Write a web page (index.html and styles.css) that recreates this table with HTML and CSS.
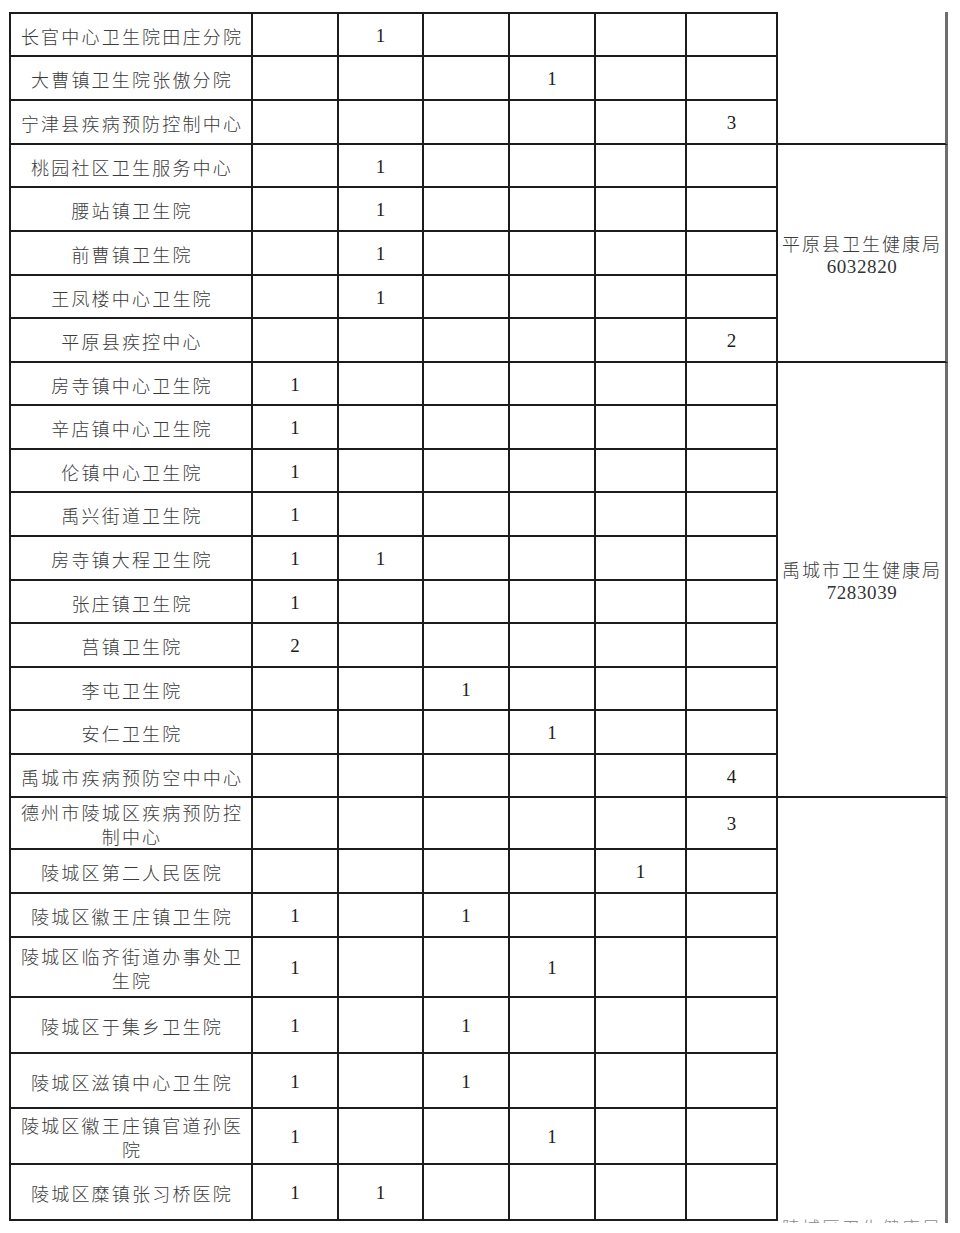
FILE: index.html
```html
<!DOCTYPE html>
<html lang="zh-CN">
<head>
<meta charset="utf-8">
<title>卫生院名额表</title>
<link rel="stylesheet" href="styles.css">
</head>
<body>
<div class="sheet">
  <div class="c name top">长官中心卫生院田庄分院</div><div class="c top"></div><div class="c top">1</div><div class="c top"></div><div class="c top"></div><div class="c top"></div><div class="c top"></div>
  <div class="org g1"></div>
  <div class="c name">大曹镇卫生院张傲分院</div><div class="c"></div><div class="c"></div><div class="c"></div><div class="c">1</div><div class="c"></div><div class="c"></div>
  <div class="c name">宁津县疾病预防控制中心</div><div class="c"></div><div class="c"></div><div class="c"></div><div class="c"></div><div class="c"></div><div class="c">3</div>

  <div class="c name">桃园社区卫生服务中心</div><div class="c"></div><div class="c">1</div><div class="c"></div><div class="c"></div><div class="c"></div><div class="c"></div>
  <div class="org g2"><span>平原县卫生健康局</span><span class="tel">6032820</span></div>
  <div class="c name">腰站镇卫生院</div><div class="c"></div><div class="c">1</div><div class="c"></div><div class="c"></div><div class="c"></div><div class="c"></div>
  <div class="c name">前曹镇卫生院</div><div class="c"></div><div class="c">1</div><div class="c"></div><div class="c"></div><div class="c"></div><div class="c"></div>
  <div class="c name">王凤楼中心卫生院</div><div class="c"></div><div class="c">1</div><div class="c"></div><div class="c"></div><div class="c"></div><div class="c"></div>
  <div class="c name">平原县疾控中心</div><div class="c"></div><div class="c"></div><div class="c"></div><div class="c"></div><div class="c"></div><div class="c">2</div>

  <div class="c name">房寺镇中心卫生院</div><div class="c">1</div><div class="c"></div><div class="c"></div><div class="c"></div><div class="c"></div><div class="c"></div>
  <div class="org g3"><span>禹城市卫生健康局</span><span class="tel">7283039</span></div>
  <div class="c name">辛店镇中心卫生院</div><div class="c">1</div><div class="c"></div><div class="c"></div><div class="c"></div><div class="c"></div><div class="c"></div>
  <div class="c name">伦镇中心卫生院</div><div class="c">1</div><div class="c"></div><div class="c"></div><div class="c"></div><div class="c"></div><div class="c"></div>
  <div class="c name">禹兴街道卫生院</div><div class="c">1</div><div class="c"></div><div class="c"></div><div class="c"></div><div class="c"></div><div class="c"></div>
  <div class="c name">房寺镇大程卫生院</div><div class="c">1</div><div class="c">1</div><div class="c"></div><div class="c"></div><div class="c"></div><div class="c"></div>
  <div class="c name">张庄镇卫生院</div><div class="c">1</div><div class="c"></div><div class="c"></div><div class="c"></div><div class="c"></div><div class="c"></div>
  <div class="c name">莒镇卫生院</div><div class="c">2</div><div class="c"></div><div class="c"></div><div class="c"></div><div class="c"></div><div class="c"></div>
  <div class="c name">李屯卫生院</div><div class="c"></div><div class="c"></div><div class="c">1</div><div class="c"></div><div class="c"></div><div class="c"></div>
  <div class="c name">安仁卫生院</div><div class="c"></div><div class="c"></div><div class="c"></div><div class="c">1</div><div class="c"></div><div class="c"></div>
  <div class="c name">禹城市疾病预防空中中心</div><div class="c"></div><div class="c"></div><div class="c"></div><div class="c"></div><div class="c"></div><div class="c">4</div>

  <div class="c name">德州市陵城区疾病预防控制中心</div><div class="c"></div><div class="c"></div><div class="c"></div><div class="c"></div><div class="c"></div><div class="c">3</div>
  <div class="org g4"><div class="cut">陵城区卫生健康局</div></div>
  <div class="c name">陵城区第二人民医院</div><div class="c"></div><div class="c"></div><div class="c"></div><div class="c"></div><div class="c">1</div><div class="c"></div>
  <div class="c name">陵城区徽王庄镇卫生院</div><div class="c">1</div><div class="c"></div><div class="c">1</div><div class="c"></div><div class="c"></div><div class="c"></div>
  <div class="c name">陵城区临齐街道办事处卫生院</div><div class="c">1</div><div class="c"></div><div class="c"></div><div class="c">1</div><div class="c"></div><div class="c"></div>
  <div class="c name">陵城区于集乡卫生院</div><div class="c">1</div><div class="c"></div><div class="c">1</div><div class="c"></div><div class="c"></div><div class="c"></div>
  <div class="c name">陵城区滋镇中心卫生院</div><div class="c">1</div><div class="c"></div><div class="c">1</div><div class="c"></div><div class="c"></div><div class="c"></div>
  <div class="c name">陵城区徽王庄镇官道孙医院</div><div class="c">1</div><div class="c"></div><div class="c"></div><div class="c">1</div><div class="c"></div><div class="c"></div>
  <div class="c name">陵城区糜镇张习桥医院</div><div class="c">1</div><div class="c">1</div><div class="c"></div><div class="c"></div><div class="c"></div><div class="c"></div>
</div>
</body>
</html>
```

FILE: styles.css
```css
html, body {
  margin: 0;
  padding: 0;
  background: #ffffff;
}

body {
  font-family: "Liberation Serif", "Noto Sans CJK SC", serif;
  color: #222222;
}

.sheet {
  display: grid;
  grid-template-columns: 244px 86px 85px 86px 86px 91px 91px 170px;
  grid-template-rows: 45px 44px 44px 43px 44px 44px 43px 44px 43px 44px 43px 44px 44px 43px 44px 43px 44px 43px 52px 44px 44px 60px 56px 55px 56px 56px 2px;
  margin: 12px 0 0 9px;
  width: 939px;
}

.c {
  box-sizing: border-box;
  border-right: 2px solid #1c1c1c;
  border-bottom: 2px solid #1c1c1c;
  display: flex;
  align-items: center;
  justify-content: center;
  text-align: center;
  padding-top: 2px;
  font-size: 19px;
  line-height: 24px;
  color: #231a1a;
}

.c.top {
  border-top: 2px solid #1c1c1c;
}

.c.name {
  border-left: 2px solid #1c1c1c;
  padding: 2px 6px 0 8px;
  font-family: "Noto Sans CJK SC", sans-serif;
  font-size: 18px;
  letter-spacing: 2.2px;
  color: #3a3a3a;
  font-weight: 300;
}

.org {
  grid-column: 8;
  box-sizing: border-box;
  border-right: 3px solid #6e6e6e;
  display: flex;
  flex-direction: column;
  align-items: center;
  justify-content: center;
  text-align: center;
  font-family: "Noto Sans CJK SC", sans-serif;
  font-size: 18px;
  line-height: 24px;
  letter-spacing: 2px;
  color: #3a3a3a;
  font-weight: 300;
  padding-left: 1px;
}

.org .tel {
  font-family: "Liberation Serif", serif;
  font-size: 19px;
  letter-spacing: 0.6px;
  color: #333333;
  font-weight: 400;
}

.g1 {
  grid-row: 1 / 4;
  border-bottom: 2px solid #1c1c1c;
}

.g2 {
  grid-row: 4 / 9;
  border-bottom: 2px solid #1c1c1c;
  padding-top: 3px;
}

.g3 {
  grid-row: 9 / 19;
  border-bottom: 2px solid #1c1c1c;
  padding-top: 3px;
}

.g4 {
  grid-row: 19 / 28;
  justify-content: flex-end;
}

.g4 .cut {
  height: 5px;
  overflow: hidden;
  line-height: 18px;
  color: #8a8a8a;
}
```
